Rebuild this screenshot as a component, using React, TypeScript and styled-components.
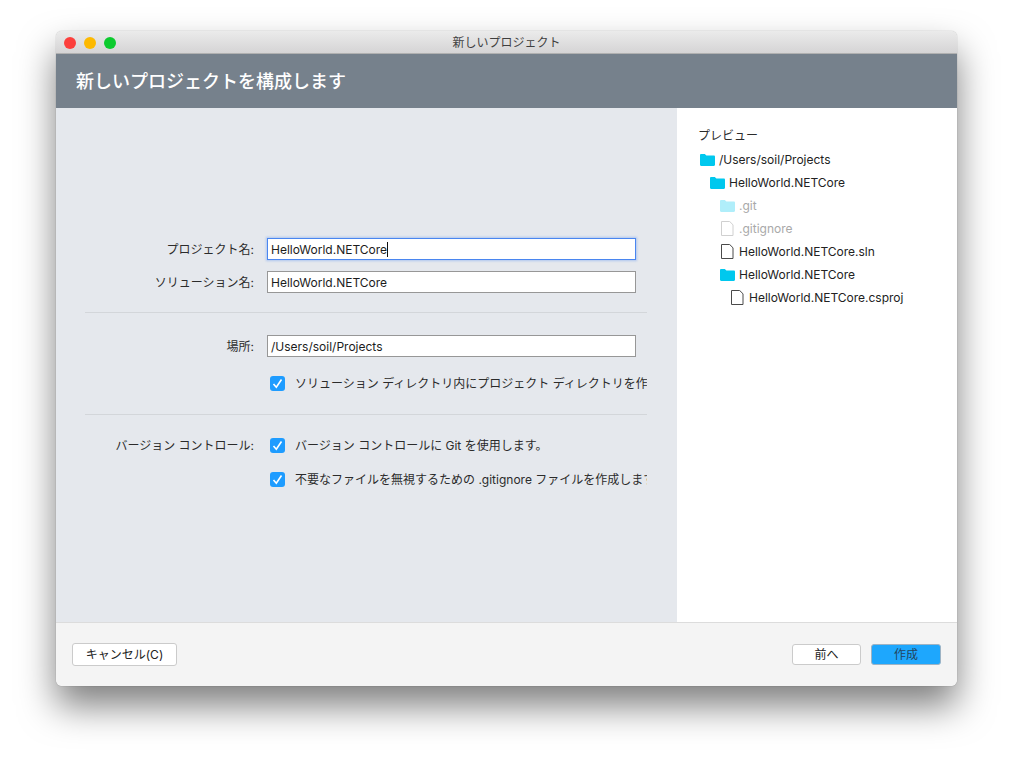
import { createGlobalStyle, styled } from "styled-components";

const GlobalStyle = createGlobalStyle`
  html, body {
    margin: 0;
    padding: 0;
    background: #fff;
  }
  body {
    font-family: Inter, "Noto Sans CJK JP", sans-serif;
    font-size: 12px;
    line-height: 16px;
    color: #2b2b2b;
    overflow: hidden;
  }
`;

const Page = styled.div`
  width: 1013px;
  height: 766px;
  padding: 31px 0 0 56px;
  box-sizing: border-box;
`;

const Window = styled.div`
  width: 901px;
  height: 655px;
  display: flex;
  flex-direction: column;
  border-radius: 6px;
  overflow: hidden;
  box-shadow: 0 0 1px rgba(0, 0, 0, 0.45), 0 20px 36px rgba(0, 0, 0, 0.5);
`;

const TitleBar = styled.div`
  height: 23px;
  flex: none;
  display: flex;
  align-items: center;
  position: relative;
  background: linear-gradient(#ebebeb, #d5d4d5);
  border-bottom: 1px solid #b0b0b0;
  box-sizing: border-box;
  padding: 1px 0 0 8px;
  gap: 8px;
`;

const Light = styled.span<{ $color: string }>`
  width: 12px;
  height: 12px;
  border-radius: 50%;
  background: ${(p) => p.$color};
`;

const WindowTitle = styled.div`
  position: absolute;
  top: 4px;
  left: 0;
  right: 0;
  text-align: center;
  font-size: 12px;
  color: #3f3f3f;
`;

const Header = styled.div`
  height: 54px;
  flex: none;
  background: #76818c;
  color: #fff;
  font-size: 18px;
  font-weight: 500;
  display: flex;
  align-items: center;
  padding: 2px 0 0 20px;
  box-sizing: border-box;
`;

const Body = styled.div`
  flex: 1;
  display: flex;
  min-height: 0;
`;

const FormPanel = styled.div`
  width: 621px;
  flex: none;
  background: #e5e8ed;
  box-sizing: border-box;
  padding: 130px 30px 0 29px;
`;

const Row = styled.div<{ $mb?: number }>`
  display: grid;
  grid-template-columns: 169px minmax(0, 1fr);
  column-gap: 13px;
  align-items: center;
  margin-bottom: ${(p) => p.$mb ?? 0}px;
`;

const Label = styled.div`
  text-align: right;
  white-space: nowrap;
  height: 16px;
  padding-top: 1px;
  box-sizing: border-box;
`;

const Field = styled.div<{ $focused?: boolean }>`
  width: 369px;
  height: 22px;
  box-sizing: border-box;
  background: #fff;
  border: 1px solid ${(p) => (p.$focused ? "#4a86f0" : "#979797")};
  box-shadow: ${(p) => (p.$focused ? "0 0 2px 1px rgba(74,134,240,0.35)" : "none")};
  padding: 2px 0 0 3px;
  display: flex;
  align-items: center;
  color: #1c1c1c;
`;

const Caret = styled.span`
  width: 1px;
  height: 15px;
  margin-top: -2px;
  background: #111;
`;

const Divider = styled.div<{ $mt: number; $mb: number }>`
  height: 1px;
  background: #d3d6da;
  margin: ${(p) => p.$mt}px 0 ${(p) => p.$mb}px;
`;

const CheckRow = styled.div`
  display: flex;
  align-items: center;
  gap: 10px;
  padding-left: 3px;
  height: 16px;
  overflow: hidden;
  white-space: nowrap;
  min-width: 0;
`;

const CheckText = styled.span`
  padding-top: 2px;
`;

const CheckBox = styled.span`
  width: 15px;
  height: 15px;
  flex: none;
  border-radius: 3px;
  background: #1e9cff;
  display: flex;
  align-items: center;
  justify-content: center;
`;

const PreviewPanel = styled.div`
  flex: 1;
  background: #fff;
  padding: 20px 0 0 21px;
`;

const PreviewTitle = styled.div`
  font-size: 12px;
  line-height: 15px;
  margin-bottom: 5px;
`;

const TreeRow = styled.div<{ $level: number; $muted?: boolean }>`
  height: 23px;
  display: flex;
  align-items: center;
  gap: 4px;
  padding-left: ${(p) => 2 + p.$level * 10}px;
  color: ${(p) => (p.$muted ? "#a9a9a9" : "#222")};
  white-space: nowrap;
`;

const Footer = styled.div`
  height: 64px;
  flex: none;
  background: #f4f4f4;
  border-top: 1px solid #dcdcdc;
  box-sizing: border-box;
  display: flex;
  align-items: center;
  padding: 0 16px;
  gap: 10px;
`;

const Button = styled.button<{ $primary?: boolean; $width: number }>`
  width: ${(p) => p.$width}px;
  height: 21px;
  padding: 0;
  border-radius: 3px;
  border: 1px solid ${(p) => (p.$primary ? "#9db3c4" : "#cbcbcb")};
  background: ${(p) => (p.$primary ? "#1ea7fd" : "#fff")};
  color: ${(p) => (p.$primary ? "#23465f" : "#222")};
  font: inherit;
`;

const CancelButton = styled(Button)`
  height: 23px;
  margin-right: auto;
`;

const Check = () => (
  <svg width="11" height="11" viewBox="0 0 11 11">
    <path d="M1.5 6l2.8 3.2L9.5 1.5" fill="none" stroke="#fff" strokeWidth="1.6" />
  </svg>
);

const FolderIcon = ({ muted }: { muted?: boolean }) => (
  <svg width="15" height="12" viewBox="0 0 15 12">
    <path
      d="M0 1.2C0 .5.5 0 1.2 0h3.6l1.6 1.6h7.4c.7 0 1.2.5 1.2 1.2v8c0 .7-.5 1.2-1.2 1.2H1.2C.5 12 0 11.5 0 10.8z"
      fill={muted ? "#b0eefa" : "#00c8ee"}
    />
  </svg>
);

const FileIcon = ({ muted }: { muted?: boolean }) => (
  <svg width="15" height="15" viewBox="0 0 15 15">
    <path
      d="M1.5.5h8.2l3.3 3.3v10.7H1.5z"
      fill="#fff"
      stroke={muted ? "#d0d0d0" : "#4a4a4a"}
      strokeWidth="1"
      strokeLinejoin="round"
    />
  </svg>
);

const App = () => (
  <Page>
    <GlobalStyle />
    <Window>
      <TitleBar>
        <Light $color="#fc3f3c" />
        <Light $color="#fdb900" />
        <Light $color="#0ccb2e" />
        <WindowTitle>新しいプロジェクト</WindowTitle>
      </TitleBar>
      <Header>新しいプロジェクトを構成します</Header>
      <Body>
        <FormPanel>
          <Row $mb={11}>
            <Label>プロジェクト名:</Label>
            <Field $focused>
              HelloWorld.NETCore
              <Caret />
            </Field>
          </Row>
          <Row>
            <Label>ソリューション名:</Label>
            <Field>HelloWorld.NETCore</Field>
          </Row>
          <Divider $mt={19} $mb={22} />
          <Row $mb={18}>
            <Label>場所:</Label>
            <Field>/Users/soil/Projects</Field>
          </Row>
          <Row>
            <Label />
            <CheckRow>
              <CheckBox>
                <Check />
              </CheckBox>
              <CheckText>ソリューション ディレクトリ内にプロジェクト ディレクトリを作成します</CheckText>
            </CheckRow>
          </Row>
          <Divider $mt={23} $mb={22} />
          <Row $mb={18}>
            <Label>バージョン コントロール:</Label>
            <CheckRow>
              <CheckBox>
                <Check />
              </CheckBox>
              <CheckText>バージョン コントロールに Git を使用します。</CheckText>
            </CheckRow>
          </Row>
          <Row>
            <Label />
            <CheckRow>
              <CheckBox>
                <Check />
              </CheckBox>
              <CheckText>不要なファイルを無視するための .gitignore ファイルを作成します</CheckText>
            </CheckRow>
          </Row>
        </FormPanel>
        <PreviewPanel>
          <PreviewTitle>プレビュー</PreviewTitle>
          <TreeRow $level={0}>
            <FolderIcon />
            /Users/soil/Projects
          </TreeRow>
          <TreeRow $level={1}>
            <FolderIcon />
            HelloWorld.NETCore
          </TreeRow>
          <TreeRow $level={2} $muted>
            <FolderIcon muted />
            .git
          </TreeRow>
          <TreeRow $level={2} $muted>
            <FileIcon muted />
            .gitignore
          </TreeRow>
          <TreeRow $level={2}>
            <FileIcon />
            HelloWorld.NETCore.sln
          </TreeRow>
          <TreeRow $level={2}>
            <FolderIcon />
            HelloWorld.NETCore
          </TreeRow>
          <TreeRow $level={3}>
            <FileIcon />
            HelloWorld.NETCore.csproj
          </TreeRow>
        </PreviewPanel>
      </Body>
      <Footer>
        <CancelButton $width={105}>キャンセル(C)</CancelButton>
        <Button $width={69}>前へ</Button>
        <Button $primary $width={70}>
          作成
        </Button>
      </Footer>
    </Window>
  </Page>
);

export default App;
